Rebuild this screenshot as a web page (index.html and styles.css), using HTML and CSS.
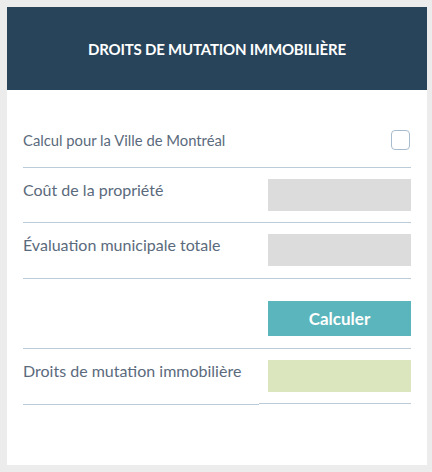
FILE: index.html
```html
<!DOCTYPE html>
<html lang="fr">
<head>
  <meta charset="UTF-8">
  <meta name="viewport" content="width=device-width, initial-scale=1.0">
  <title>Droits de mutation immobilière</title>
  <link rel="stylesheet" href="styles.css">
</head>
<body>
  <div class="calc-card">
    <header class="calc-header">
      <h1>Droits de mutation immobilière</h1>
    </header>

    <div class="calc-body">
      <label class="row row-check">
        <span class="row-label">Calcul pour la Ville de Montréal</span>
        <input type="checkbox" class="check">
      </label>

      <div class="row">
        <span class="row-label">Coût de la propriété</span>
        <input type="text" class="field">
      </div>

      <div class="row row-eval">
        <span class="row-label">Évaluation municipale totale</span>
        <input type="text" class="field">
      </div>

      <div class="row row-action">
        <span class="row-label"></span>
        <button class="calc-button">Calculer</button>
      </div>

      <div class="row row-result">
        <span class="row-label">Droits de mutation immobilière</span>
        <div class="result-cell">
          <div class="field result"></div>
        </div>
      </div>
    </div>
  </div>
</body>
</html>
```

FILE: styles.css
```css
body {
  margin: 0;
  background: #ececec;
  font-family: 'Lato', 'Noto Sans', sans-serif;
}
.calc-card {
  margin: 7px 5px 7px 7px;
  height: 458px;
  background: #fff;
}
.calc-header {
  height: 83px;
  background: #27445a;
  display: flex;
  align-items: center;
  justify-content: center;
}
.calc-header h1 {
  margin: 0;
  color: #fff;
  font-size: 15px;
  font-weight: 700;
  text-transform: uppercase;
  letter-spacing: -0.2px;
}
.calc-body {
  padding: 0 16px;
}
.row {
  display: flex;
  justify-content: space-between;
  align-items: flex-start;
  padding: 11px 0;
  border-bottom: 1px solid #bccbd8;
}
.row-label {
  color: #5a6a7c;
  font-size: 16px;
  line-height: 20px;
  padding-top: 1px;
}
.row-check {
  align-items: center;
  padding: 40px 0 17px;
  cursor: pointer;
}
.row-check .row-label {
  font-size: 14.8px;
  padding-top: 0;
}
.check {
  appearance: none;
  -webkit-appearance: none;
  margin: 0 1px 0 0;
  width: 19px;
  height: 20px;
  border: 1.5px solid #a7bccf;
  border-radius: 4px;
  box-sizing: border-box;
  background: #fff;
}
.field {
  width: 143px;
  height: 32px;
  box-sizing: border-box;
  border: none;
  background: #dcdcdc;
  margin: 0;
  padding: 0 8px;
}
.row-eval {
  padding-bottom: 12px;
}
.row-action {
  padding: 22px 0 12px;
}
.calc-button {
  width: 143px;
  height: 35px;
  border: none;
  margin: 0;
  background: #5bb5bc;
  color: #fff;
  font-family: 'Lato', 'Noto Sans', sans-serif;
  font-size: 17px;
  font-weight: 700;
  cursor: pointer;
}
.row-result {
  border-bottom: none;
  padding: 0;
  align-items: stretch;
}
.row-result .row-label {
  flex: 1;
  padding-top: 12px;
  padding-bottom: 20px;
  border-bottom: 1px solid #bccbd8;
}
.result-cell {
  padding: 11px 0 11px 9px;
  margin-bottom: 1px;
  border-bottom: 1px solid #bccbd8;
}
.result {
  background: #dce6be;
}
```
